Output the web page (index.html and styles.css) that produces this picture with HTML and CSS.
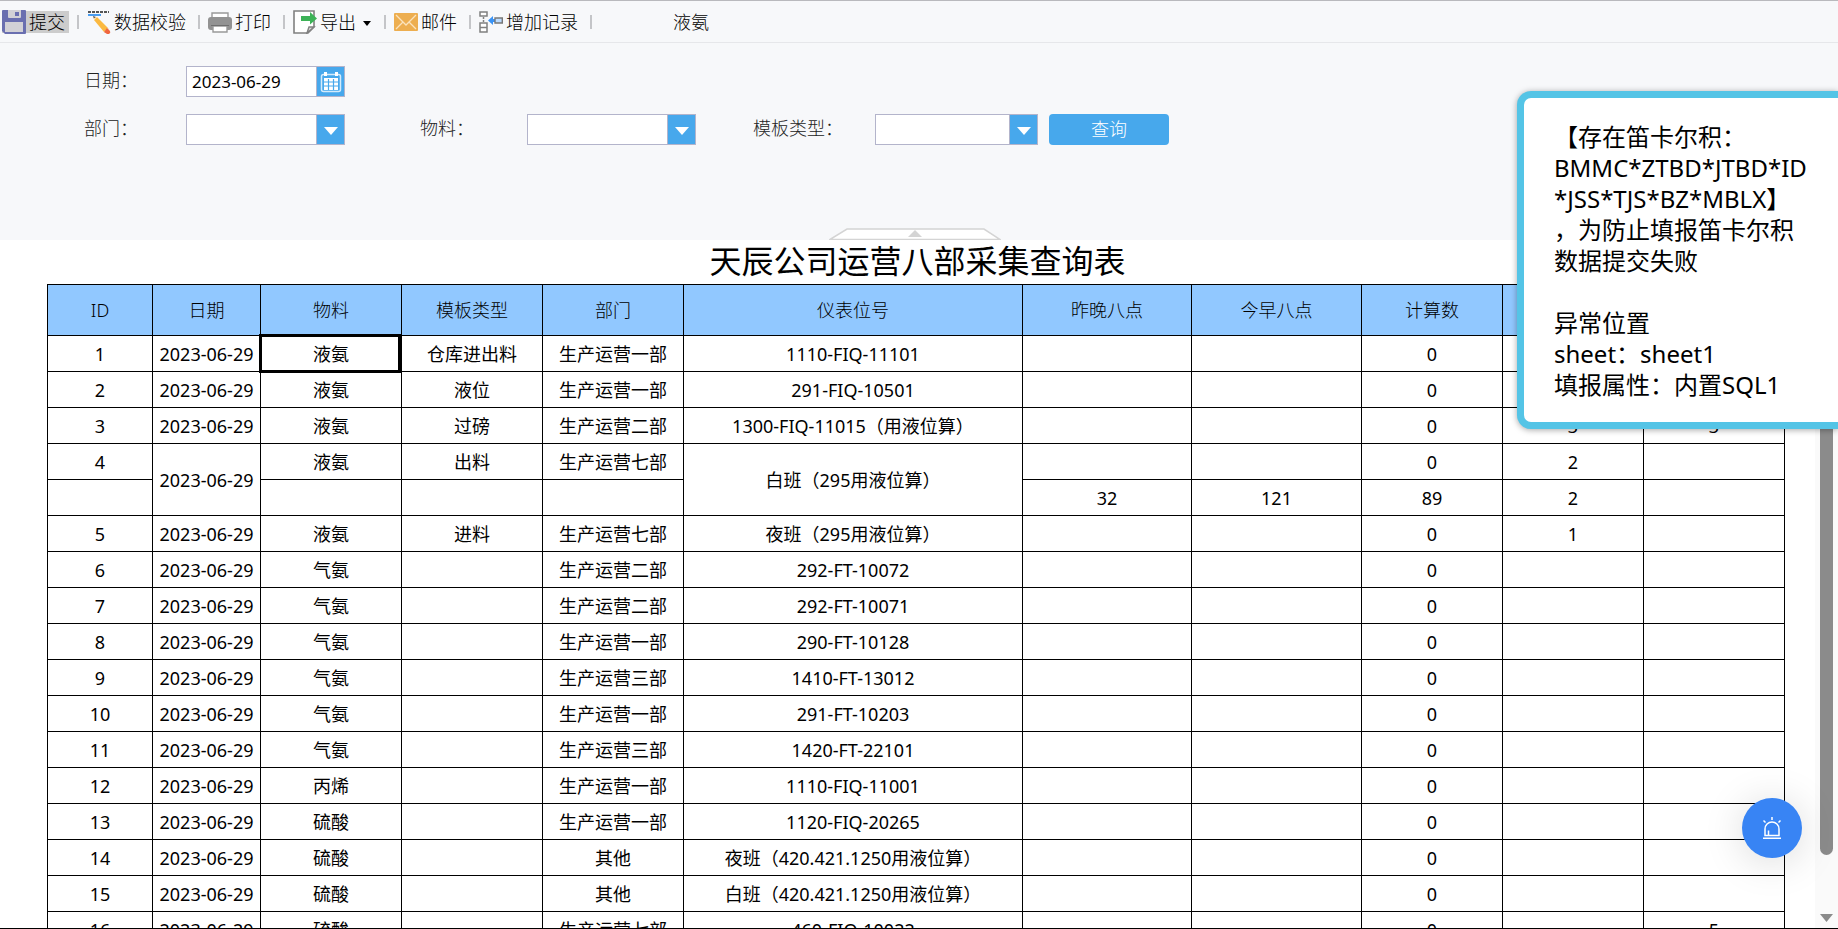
FILE: index.html
```html
<!DOCTYPE html>
<html lang="zh-CN">
<head>
<meta charset="utf-8">
<title>天辰公司运营八部采集查询表</title>
<link rel="stylesheet" href="styles.css">
</head>
<body>
<header class="toolbar">
  <button class="tool tool-active" type="button">
    <svg class="icon" viewBox="0 0 24 24"><path fill="#6a6fb0" d="M1 0h22a1 1 0 0 1 1 1v22a1 1 0 0 1-1 1H3l-3-3V1a1 1 0 0 1 1-1z"/><path fill="#d2d1d6" d="M6 0h13v7a1 1 0 0 1-1 1H7a1 1 0 0 1-1-1z"/><path fill="#6a6fb0" d="M13 2h4v4h-4z"/><path fill="#d2d1d6" d="M3 12h18v10H3z"/></svg>
    <span>提交</span>
  </button>
  <span class="sep"></span>
  <button class="tool" type="button">
    <svg class="icon" viewBox="0 0 24 24"><path stroke="#555" stroke-width="2" stroke-dasharray="3 1" d="M1 2h21"/><path stroke="#4a9df0" stroke-width="2" d="M1 5h13"/><path fill="#fbb940" d="M10 7l11 11-4 4L7 10z"/><path fill="#5b4a3a" d="M6 6l3 1-2 2z"/><path fill="#f3dcae" d="M7 8l3-1-3 3z"/><path fill="#e6dcc8" d="M17 22l4-4 1 1-4 4z"/><path fill="#f0663e" d="M20 18l3 3q1 2-1 3h-2l-3-2z"/></svg>
    <span>数据校验</span>
  </button>
  <span class="sep"></span>
  <button class="tool" type="button">
    <svg class="icon" viewBox="0 0 24 24"><path fill="#fff" stroke="#999" stroke-width="1.4" d="M4 8V3h16v5"/><rect y="7" width="24" height="13" rx="3" fill="#929292"/><path fill="#fff" stroke="#999" stroke-width="1.4" d="M5 16h14v6H5z"/><path stroke="#6e6e6e" d="M3 15.500h18"/></svg>
    <span>打印</span>
  </button>
  <span class="sep"></span>
  <button class="tool" type="button">
    <svg class="icon" viewBox="0 0 24 24"><path fill="#fff" stroke="#808080" stroke-width="1.600" d="M1 1h20v16l-6 6H1z"/><path fill="#ddd" stroke="#808080" stroke-width="1.400" d="M14 23l2-6h5z"/><path fill="#3cb257" d="M8 6h9V2l7 6.500-7 6V11H8z"/></svg>
    <span>导出</span>
    <svg class="caret" viewBox="0 0 8 5"><path d="M0 0h8L4 5z"/></svg>
  </button>
  <span class="sep"></span>
  <button class="tool" type="button">
    <svg class="icon" viewBox="0 0 24 24"><rect y="3" width="24" height="18" rx="1" fill="#edae50"/><path fill="none" stroke="#fbe3bd" stroke-width="1.300" d="M2 5l10 10L22 5M2 19l7-7M22 19l-7-7"/></svg>
    <span>邮件</span>
  </button>
  <span class="sep"></span>
  <button class="tool" type="button">
    <svg class="icon" viewBox="0 0 24 24"><path fill="#fff" stroke="#808080" stroke-width="1.500" d="M1 2h7v4H1zM1 13h7v9H1zM1 17.500h7"/><path stroke="#808080" stroke-width="1.500" stroke-dasharray="2 1" d="M4.500 7v5"/><path fill="#3a93f5" d="M9 10.500l5-4.500v3h2v3h-2v3z"/><path fill="#bcdcff" stroke="#777" stroke-width="1.400" d="M16 8h7.300v5H16z"/></svg>
    <span>增加记录</span>
  </button>
  <span class="sep"></span>
  <span class="cell-value">液氨</span>
</header>

<form class="filters">
  <label class="row-start" for="date">日期：</label>
  <div class="field">
    <input id="date" type="text" value="2023-06-29">
    <button class="field-btn" type="button" aria-label="选择日期">
      <svg class="calendar" viewBox="0 0 22 22"><rect x="1.500" y="3.500" width="19" height="17" rx="2" fill="none" stroke="#d4ebfb" stroke-width="1.500"/><path fill="#fff" d="M4 1h3v4H4zM15 1h3v4h-3zM4 7h14v12H4z"/><path stroke="#47a8ec" stroke-width="1.200" d="M4 11h14M4 15h14M8.500 8v11M13.500 8v11"/></svg>
    </button>
  </div>
  <label class="row-start" for="dept">部门：</label>
  <div class="field">
    <select id="dept"><option></option></select>
    <span class="field-btn"><svg class="arrow" viewBox="0 0 14 8"><path d="M0 0h14L7 8z"/></svg></span>
  </div>
  <label for="material">物料：</label>
  <div class="field field-material">
    <select id="material"><option></option></select>
    <span class="field-btn"><svg class="arrow" viewBox="0 0 14 8"><path d="M0 0h14L7 8z"/></svg></span>
  </div>
  <label for="template">模板类型：</label>
  <div class="field field-template">
    <select id="template"><option></option></select>
    <span class="field-btn"><svg class="arrow" viewBox="0 0 14 8"><path d="M0 0h14L7 8z"/></svg></span>
  </div>
  <button class="query" type="button">查询</button>
  <button class="collapse" type="button" aria-label="收起">
    <svg viewBox="0 0 172 12"><path fill="#fff" stroke="#d4d4d4" stroke-width="1.500" d="M1 11.500L18 1h137l16 10.500z"/><path fill="#d4d4d4" d="M79 9L86 2l7 7z"/></svg>
  </button>
</form>

<main class="sheet">
  <div class="sheet-body">
    <table class="report">
      <caption>天辰公司运营八部采集查询表</caption>
      <colgroup>
        <col class="c-id"><col class="c-date"><col class="c-std"><col class="c-std"><col class="c-std"><col class="c-tag"><col class="c-night"><col class="c-morning"><col class="c-std"><col class="c-std"><col class="c-std">
      </colgroup>
      <thead>
        <tr><th>ID</th><th>日期</th><th>物料</th><th>模板类型</th><th>部门</th><th>仪表位号</th><th>昨晚八点</th><th>今早八点</th><th>计算数</th><th></th><th></th></tr>
      </thead>
      <tbody>
        <tr><td>1</td><td>2023-06-29</td><td class="selected">液氨</td><td>仓库进出料</td><td>生产运营一部</td><td>1110-FIQ-11101</td><td></td><td></td><td>0</td><td></td><td></td></tr>
        <tr><td>2</td><td>2023-06-29</td><td>液氨</td><td>液位</td><td>生产运营一部</td><td>291-FIQ-10501</td><td></td><td></td><td>0</td><td></td><td></td></tr>
        <tr><td>3</td><td>2023-06-29</td><td>液氨</td><td>过磅</td><td>生产运营二部</td><td>1300-FIQ-11015（用液位算）</td><td></td><td></td><td>0</td><td>3</td><td>3</td></tr>
        <tr><td>4</td><td rowspan="2">2023-06-29</td><td>液氨</td><td>出料</td><td>生产运营七部</td><td rowspan="2">白班（295用液位算）</td><td></td><td></td><td>0</td><td>2</td><td></td></tr>
        <tr><td></td><td></td><td></td><td></td><td>32</td><td>121</td><td>89</td><td>2</td><td></td></tr>
        <tr><td>5</td><td>2023-06-29</td><td>液氨</td><td>进料</td><td>生产运营七部</td><td>夜班（295用液位算）</td><td></td><td></td><td>0</td><td>1</td><td></td></tr>
        <tr><td>6</td><td>2023-06-29</td><td>气氨</td><td></td><td>生产运营二部</td><td>292-FT-10072</td><td></td><td></td><td>0</td><td></td><td></td></tr>
        <tr><td>7</td><td>2023-06-29</td><td>气氨</td><td></td><td>生产运营二部</td><td>292-FT-10071</td><td></td><td></td><td>0</td><td></td><td></td></tr>
        <tr><td>8</td><td>2023-06-29</td><td>气氨</td><td></td><td>生产运营一部</td><td>290-FT-10128</td><td></td><td></td><td>0</td><td></td><td></td></tr>
        <tr><td>9</td><td>2023-06-29</td><td>气氨</td><td></td><td>生产运营三部</td><td>1410-FT-13012</td><td></td><td></td><td>0</td><td></td><td></td></tr>
        <tr><td>10</td><td>2023-06-29</td><td>气氨</td><td></td><td>生产运营一部</td><td>291-FT-10203</td><td></td><td></td><td>0</td><td></td><td></td></tr>
        <tr><td>11</td><td>2023-06-29</td><td>气氨</td><td></td><td>生产运营三部</td><td>1420-FT-22101</td><td></td><td></td><td>0</td><td></td><td></td></tr>
        <tr><td>12</td><td>2023-06-29</td><td>丙烯</td><td></td><td>生产运营一部</td><td>1110-FIQ-11001</td><td></td><td></td><td>0</td><td></td><td></td></tr>
        <tr><td>13</td><td>2023-06-29</td><td>硫酸</td><td></td><td>生产运营一部</td><td>1120-FIQ-20265</td><td></td><td></td><td>0</td><td></td><td></td></tr>
        <tr><td>14</td><td>2023-06-29</td><td>硫酸</td><td></td><td>其他</td><td>夜班（420.421.1250用液位算）</td><td></td><td></td><td>0</td><td></td><td></td></tr>
        <tr><td>15</td><td>2023-06-29</td><td>硫酸</td><td></td><td>其他</td><td>白班（420.421.1250用液位算）</td><td></td><td></td><td>0</td><td></td><td></td></tr>
        <tr><td>16</td><td>2023-06-29</td><td>硫酸</td><td></td><td>生产运营七部</td><td>460-FIQ-10022</td><td></td><td></td><td>0</td><td></td><td>5</td></tr>
      </tbody>
    </table>
  </div>
  <div class="scrollbar">
    <div class="thumb"></div>
    <svg class="scroll-down" viewBox="0 0 13 8"><path d="M0 0h13L6.500 8z"/></svg>
  </div>
</main>

<aside class="toast" role="alert">【存在笛卡尔积：<br>BMMC*ZTBD*JTBD*ID<br>*JSS*TJS*BZ*MBLX】<br>，为防止填报笛卡尔积<br>数据提交失败<br><br>异常位置<br>sheet：sheet1<br>填报属性：内置SQL1</aside>

<button class="fab" type="button" aria-label="报警">
  <svg viewBox="0 0 20 22" fill="none" stroke="#fff" stroke-width="1.500"><path d="M3 18.500V12a7 7 0 0 1 14 0v6.500zM1 21.300h18M6.500 18v-4.500M10 0v3M1.500 3.500l2 2M18.500 3.500l-2 2"/></svg>
</button>
</body>
</html>
```
FILE: styles.css
```css
* {
  box-sizing: border-box;
}

body {
  margin: 0;
  height: 100vh;
  display: flex;
  flex-direction: column;
  overflow: hidden;
  background: #fff;
  border-bottom: 1px solid #000;
  color: #000;
  font: 18px/24px "Noto Sans", "Noto Sans CJK SC", sans-serif;
  font-weight: 300;
}

button,
input,
select {
  margin: 0;
  padding: 0;
  border: 0;
  background: none;
  color: inherit;
  font: inherit;
}

svg {
  display: block;
}

/* Toolbar */
.toolbar {
  flex: none;
  display: flex;
  align-items: center;
  height: 43px;
  padding: 1px 0 0 2px;
  border-top: 1px solid #b9b9bd;
  border-bottom: 1px solid #e6e7ea;
  background: #f7f8fa;
  white-space: nowrap;
}

.tool {
  display: flex;
  align-items: center;
  gap: 3px;
  height: 22px;
  padding-right: 4px;
  line-height: 20px;
}

.tool-active {
  background: #ccc;
}

.icon {
  width: 24px;
  height: 24px;
}

.caret {
  width: 8px;
  height: 5px;
  margin: 2px 1px 0 4px;
}

.sep {
  width: 2px;
  height: 14px;
  margin: 0 8px;
  background: #c4c5c8;
}

.cell-value {
  margin-left: 73px;
}

/* Query form */
.filters {
  position: relative;
  flex: none;
  display: grid;
  grid-template-columns: 102px 234px 107px 226px 122px 174px 120px;
  grid-auto-rows: 31px;
  row-gap: 17px;
  height: 197px;
  padding: 23px 0 0 84px;
  background: #f7f8fa;
}

.filters label {
  line-height: 28px;
  color: #222;
}

.row-start {
  grid-column-start: 1;
}

.field {
  display: flex;
  width: 159px;
  border: 1px solid #b3b4cb;
  background: #fff;
}

.field-material {
  width: 169px;
}

.field-template {
  width: 163px;
}

.field input,
.field select {
  flex: 1;
  min-width: 0;
  padding: 0 5px;
  appearance: none;
  outline: 0;
  font-size: 17px;
  font-weight: 400;
}

.field-btn {
  flex: none;
  display: flex;
  align-items: center;
  justify-content: center;
  width: 28px;
  border-left: 1px solid #b3b4cb;
  background: #47a8ec;
}

.calendar {
  width: 22px;
  height: 22px;
}

.arrow {
  width: 14px;
  height: 8px;
  margin-top: 2px;
  fill: #fff;
}

.query {
  padding-bottom: 2px;
  border-radius: 4px;
  background: #47a8ec;
  color: #fff;
}

.collapse {
  position: absolute;
  bottom: 0;
  left: calc(50% - 90px);
  width: 172px;
  height: 12px;
}

/* Report */
.sheet {
  flex: 1;
  min-height: 0;
  display: flex;
}

.sheet-body {
  flex: 1;
  min-width: 0;
  overflow: hidden;
  padding-left: 47px;
}

.report {
  table-layout: fixed;
  width: 1738px;
  border-collapse: collapse;
  font-weight: 400;
}

.report caption {
  height: 44px;
  padding-left: 3px;
  line-height: 42px;
  font-size: 32px;
}

.c-id { width: 105px; }
.c-date { width: 108px; }
.c-std { width: 141px; }
.c-tag { width: 339px; }
.c-night { width: 169px; }
.c-morning { width: 170px; }

.report th,
.report td {
  height: 36px;
  padding: 0;
  border: 1px solid #000;
  text-align: center;
  white-space: nowrap;
}

.report th {
  height: 51px;
  background: #91c8ff;
  font-weight: 300;
}

.report .selected {
  position: relative;
}

.selected::after {
  content: "";
  position: absolute;
  inset: -2px 0 -2px -2px;
  border: 3px solid #000;
}

.scrollbar {
  flex: none;
  display: flex;
  flex-direction: column;
  align-items: center;
  width: 23px;
  padding: 16px 0 6px;
  background: #fafafa;
}

.thumb {
  flex: none;
  width: 13px;
  height: 90%;
  border-radius: 7px;
  background: #8b8b8b;
}

.scroll-down {
  width: 13px;
  height: 8px;
  margin-top: auto;
  fill: #8b8b8b;
}

/* Error message */
.toast {
  position: absolute;
  top: 91px;
  right: 0;
  width: 321px;
  padding: 23px 0 22px 30px;
  border: 7px solid #54c4e6;
  border-right: 0;
  border-radius: 14px 0 0 14px;
  background: #fff;
  box-shadow: 0 1px 6px rgba(0, 0, 0, 0.35);
  font-size: 24px;
  font-weight: 400;
  line-height: 31px;
  white-space: nowrap;
}

.fab {
  position: absolute;
  right: 36px;
  bottom: 71px;
  display: flex;
  align-items: center;
  justify-content: center;
  width: 60px;
  height: 60px;
  border-radius: 50%;
  background: #3884f4;
  box-shadow: 0 4px 40px rgba(0, 0, 0, 0.15);
}

.fab svg {
  width: 20px;
  height: 22px;
}
```
